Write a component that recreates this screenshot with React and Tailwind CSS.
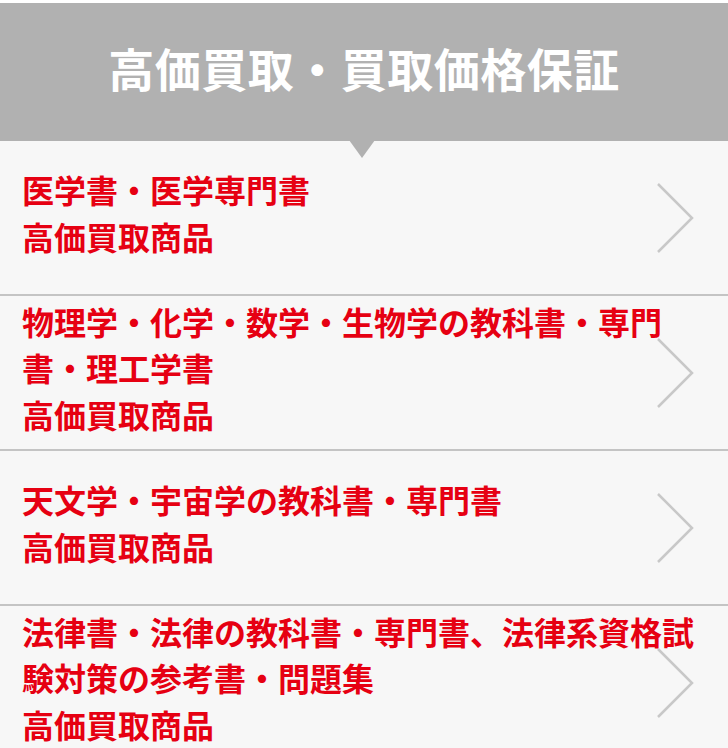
import React from "react";

const items = [
  { lines: ["医学書・医学専門書", "高価買取商品"] },
  { lines: ["物理学・化学・数学・生物学の教科書・専門", "書・理工学書", "高価買取商品"] },
  { lines: ["天文学・宇宙学の教科書・専門書", "高価買取商品"] },
  { lines: ["法律書・法律の教科書・専門書、法律系資格試", "験対策の参考書・問題集", "高価買取商品"] },
];

const Chevron = () => (
  <svg width="38" height="72" viewBox="0 0 38 72">
    <polyline points="2,2 36,36 2,70" fill="none" stroke="#c8c8c8" strokeWidth="2.5" />
  </svg>
);

export default function App() {
  return (
    <div
      className="w-[728px] h-[748px] overflow-hidden bg-white pt-[3px]"
      style={{ fontFamily: '"Noto Sans CJK JP", "Noto Sans", sans-serif' }}
    >
      <div className="relative">
        <div className="h-[138px] bg-[#b1b1b1] flex items-center justify-center pb-[10px]">
          <h1 className="text-white font-bold text-[46px] leading-none tracking-[0.5px]">
            高価買取・買取価格保証
          </h1>
        </div>
        <div className="absolute left-[349px] top-[137px] w-0 h-0 border-l-[13px] border-r-[13px] border-t-[18px] border-l-transparent border-r-transparent border-t-[#b1b1b1] z-10" />
      </div>
      <ul className="bg-[#f7f7f7]">
        {items.map((item, i) => (
          <li
            key={i}
            className="relative h-[155px] border-b-2 border-[#c4c4c4] flex items-center pl-[22px] pb-[10px]"
          >
            <p className="text-[#e60012] font-bold text-[32px] leading-[46.5px] whitespace-nowrap">
              {item.lines.map((l, j) => (
                <span key={j} className="block">
                  {l}
                </span>
              ))}
            </p>
            <div className="absolute left-[656px] top-1/2 -translate-y-1/2">
              <Chevron />
            </div>
          </li>
        ))}
      </ul>
    </div>
  );
}
